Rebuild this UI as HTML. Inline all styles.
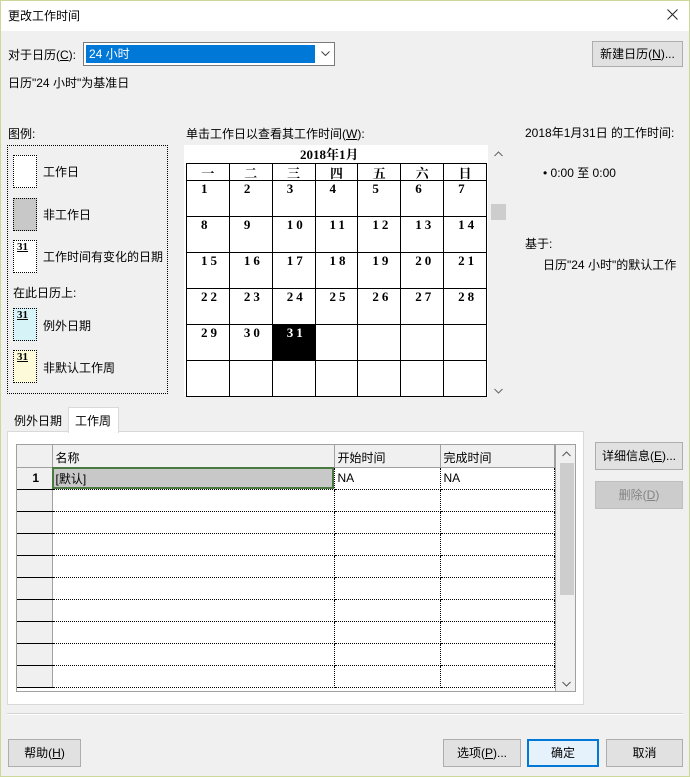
<!DOCTYPE html>
<html><head><meta charset="utf-8"><style>
*{margin:0;padding:0;box-sizing:border-box}
body{width:690px;height:777px;overflow:hidden;background:#f0f0f0;font-family:"Liberation Sans","Noto Sans CJK SC",sans-serif;font-size:12px;color:#000;position:relative}
.a{position:absolute;white-space:nowrap}
.btn{position:absolute;background:#e1e1e1;border:1px solid #adadad;text-align:center;font-size:12px}
.cal td{border:1px solid #000;width:43px;height:36px;vertical-align:top;font-family:"Liberation Serif","Noto Serif CJK SC",serif;font-weight:bold;font-size:13px;padding-left:14px;letter-spacing:3px}
.cal th{border:1px solid #000;height:17px;font-family:"Noto Serif CJK SC",serif;font-size:13px;font-weight:bold;line-height:15px}
.sw{position:absolute;left:13px;width:24px;height:33px;border:1px dotted #000;background:#fff;font-family:"Liberation Serif",serif;font-weight:bold;font-size:11px;padding-left:3px;line-height:12px}
.sw u{text-decoration:underline}
.g td{border-bottom:1px dotted #000;border-right:1px dotted #000;height:22px;padding-left:3px}
.g td.n{background:#f0f0f0;border-bottom:1px solid #000;border-right:1px solid #a0a0a0;text-align:center;font-weight:bold}
</style></head><body>
<div class="a" style="left:0;top:0;width:690px;height:777px;border:1px solid #ccd79a"></div>
<div class="a" style="left:1px;top:1px;width:688px;height:30px;background:#fff"></div>
<div class="a" style="left:8px;top:7px;font-size:12px">更改工作时间</div>
<svg class="a" style="left:667px;top:9px" width="11" height="11"><path d="M0.5 0.5L10.5 10.5M10.5 0.5L0.5 10.5" stroke="#222" stroke-width="1"/></svg>

<div class="a" style="left:8px;top:46px">对于日历(<u>C</u>):</div>
<div class="a" style="left:83px;top:42px;width:252px;height:24px;background:#fff;border:1px solid #7a7a7a"></div>
<div class="a" style="left:86px;top:45px;width:229px;height:18px;background:#0078d7;color:#fff;padding-left:3px;line-height:18px">24 小时</div>
<svg class="a" style="left:321px;top:51px" width="9" height="6"><path d="M0.5 0.5L4.5 4.5L8.5 0.5" stroke="#444" fill="none"/></svg>
<div class="btn" style="left:592px;top:41px;width:91px;height:26px;line-height:24px">新建日历(<u>N</u>)...</div>
<div class="a" style="left:8px;top:74px">日历"24 小时"为基准日</div>

<div class="a" style="left:8px;top:125px">图例:</div>
<div class="a" style="left:7px;top:145px;width:161px;height:249px;border:1px dotted #000"></div>
<div class="sw" style="top:155px"></div><div class="a" style="left:43px;top:163px">工作日</div>
<div class="sw" style="top:198px;background:#c8c8c8"></div><div class="a" style="left:43px;top:206px">非工作日</div>
<div class="sw" style="top:240px"><u>31</u></div><div class="a" style="left:43px;top:248px">工作时间有变化的日期</div>
<div class="a" style="left:13px;top:284px">在此日历上:</div>
<div class="sw" style="top:308px;background:#d6f3f8"><u>31</u></div><div class="a" style="left:43px;top:317px">例外日期</div>
<div class="sw" style="top:350px;background:#fcfad8"><u>31</u></div><div class="a" style="left:43px;top:359px">非默认工作周</div>

<div class="a" style="left:186px;top:125px">单击工作日以查看其工作时间(<u>W</u>):</div>
<div class="a" style="left:184px;top:145px;width:304px;height:251px;background:#fff"></div>
<div class="a" style="left:300px;top:144px;font-family:'Liberation Serif','Noto Serif CJK SC',serif;font-weight:bold;font-size:13px">2018年1月</div>
<table class="cal a" style="left:186px;top:163px;border-collapse:collapse;width:301px">
<tr><th>一</th><th>二</th><th>三</th><th>四</th><th>五</th><th>六</th><th>日</th></tr>
<tr><td>1</td><td>2</td><td>3</td><td>4</td><td>5</td><td>6</td><td>7</td></tr>
<tr><td>8</td><td>9</td><td>10</td><td>11</td><td>12</td><td>13</td><td>14</td></tr>
<tr><td>15</td><td>16</td><td>17</td><td>18</td><td>19</td><td>20</td><td>21</td></tr>
<tr><td>22</td><td>23</td><td>24</td><td>25</td><td>26</td><td>27</td><td>28</td></tr>
<tr><td>29</td><td>30</td><td style="background:#000;color:#fff">31</td><td></td><td></td><td></td><td></td></tr>
<tr><td></td><td></td><td></td><td></td><td></td><td></td><td></td></tr>
</table>
<svg class="a" style="left:494px;top:151px" width="9" height="6"><path d="M0.5 5L4.5 1L8.5 5" stroke="#666" fill="none"/></svg>
<div class="a" style="left:491px;top:204px;width:15px;height:16px;background:#cdcdcd"></div>
<svg class="a" style="left:494px;top:388px" width="9" height="6"><path d="M0.5 1L4.5 5L8.5 1" stroke="#666" fill="none"/></svg>

<div class="a" style="left:525px;top:124px">2018年1月31日 的工作时间:</div>
<div class="a" style="left:543px;top:164px">• 0:00 至 0:00</div>
<div class="a" style="left:525px;top:235px">基于:</div>
<div class="a" style="left:543px;top:256px">日历"24 小时"的默认工作</div>

<div class="a" style="left:7px;top:431px;width:577px;height:274px;background:#fff;border:1px solid #d9d9d9"></div>
<div class="a" style="left:14px;top:412px">例外日期</div>
<div class="a" style="left:68px;top:407px;width:51px;height:26px;background:#fff;border:1px solid #d9d9d9;border-bottom:none;padding:4px 0 0 6px">工作周</div>

<div class="a" style="left:16px;top:444px;width:560px;height:248px;border:1px solid #a0a0a0;background:#fff;overflow:hidden">
<table class="g" style="border-collapse:collapse;width:537px;table-layout:fixed">
<col style="width:35px"><col style="width:282px"><col style="width:106px"><col style="width:114px">
<tr><td class="n" style="border-bottom:1px solid #a0a0a0"></td><td style="background:#f0f0f0;border:1px solid #a0a0a0;border-top:none;padding-top:4px">名称</td><td style="background:#f0f0f0;border:1px solid #a0a0a0;border-top:none;padding-top:4px">开始时间</td><td style="background:#f0f0f0;border:1px solid #a0a0a0;border-top:none;padding-top:4px">完成时间</td></tr>
<tr><td class="n">1</td><td style="background:#c8c8c8;outline:2px solid #4a7a42;outline-offset:-2px">[默认]</td><td>NA</td><td>NA</td></tr>
<tr><td class="n"></td><td></td><td></td><td></td></tr>
<tr><td class="n"></td><td></td><td></td><td></td></tr>
<tr><td class="n"></td><td></td><td></td><td></td></tr>
<tr><td class="n"></td><td></td><td></td><td></td></tr>
<tr><td class="n"></td><td></td><td></td><td></td></tr>
<tr><td class="n"></td><td></td><td></td><td></td></tr>
<tr><td class="n"></td><td></td><td></td><td></td></tr>
<tr><td class="n"></td><td></td><td></td><td></td></tr>
<tr><td class="n"></td><td></td><td></td><td></td></tr>
</table>
<div class="a" style="left:538px;top:0;width:20px;height:246px;background:#f0f0f0;border-left:1px solid #a0a0a0"></div>
<div class="a" style="left:543px;top:18px;width:14px;height:132px;background:#cdcdcd"></div>
<svg class="a" style="left:545px;top:6px" width="9" height="6"><path d="M0.5 5L4.5 1L8.5 5" stroke="#555" fill="none"/></svg>
<svg class="a" style="left:545px;top:236px" width="9" height="6"><path d="M0.5 1L4.5 5L8.5 1" stroke="#555" fill="none"/></svg>
</div>

<div class="btn" style="left:595px;top:442px;width:88px;height:28px;line-height:26px">详细信息(<u>E</u>)...</div>
<div class="btn" style="left:595px;top:481px;width:88px;height:28px;line-height:26px;background:#cccccc;border-color:#bfbfbf;color:#838383">删除(<u>D</u>)</div>

<div class="a" style="left:7px;top:713px;width:676px;height:2px;border-top:1px solid #d6d6d6;border-bottom:1px solid #fff"></div>

<div class="btn" style="left:8px;top:739px;width:73px;height:28px;line-height:26px">帮助(<u>H</u>)</div>
<div class="btn" style="left:443px;top:739px;width:78px;height:28px;line-height:26px">选项(<u>P</u>)...</div>
<div class="btn" style="left:527px;top:739px;width:72px;height:28px;line-height:24px;border:2px solid #0078d7;background:#e5f1fb">确定</div>
<div class="btn" style="left:606px;top:739px;width:77px;height:28px;line-height:26px">取消</div>
</body></html>
